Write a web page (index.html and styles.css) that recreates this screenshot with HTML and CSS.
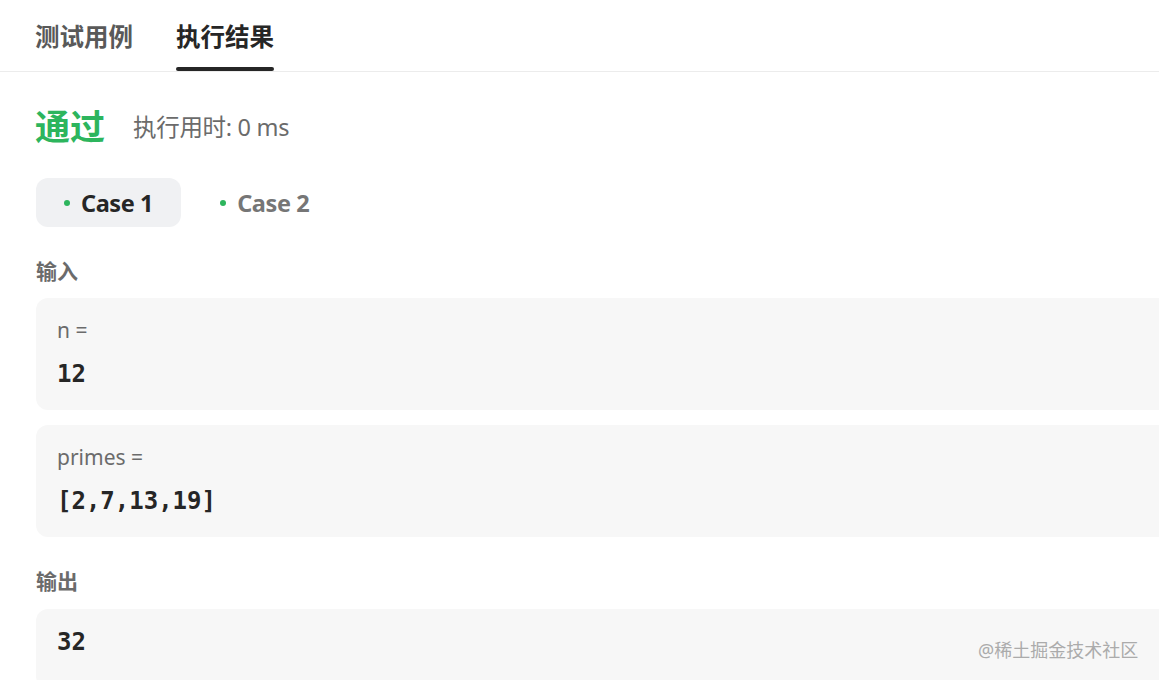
FILE: index.html
```html
<!DOCTYPE html>
<html lang="zh">
<head>
<meta charset="utf-8">
<link rel="stylesheet" href="styles.css">
</head>
<body>
<div class="page">
  <div class="tabs">
    <div class="tab">测试用例</div>
    <div class="tab active">执行结果<span class="bar"></span></div>
  </div>
  <div class="content">
    <div class="status">
      <span class="pass">通过</span>
      <span class="time">执行用时: 0 ms</span>
    </div>
    <div class="cases">
      <div class="case current"><span class="dot"></span>Case 1</div>
      <div class="case"><span class="dot"></span>Case 2</div>
    </div>
    <div class="label">输入</div>
    <div class="box">
      <div class="var">n =</div>
      <div class="val">12</div>
    </div>
    <div class="box">
      <div class="var">primes =</div>
      <div class="val">[2,7,13,19]</div>
    </div>
    <div class="label">输出</div>
    <div class="box out">
      <div class="val">32</div>
    </div>
  </div>
  <div class="watermark">@稀土掘金技术社区</div>
</div>
</body>
</html>
```
FILE: styles.css
```css
html, body {
  margin: 0;
  padding: 0;
  background: #ffffff;
  overflow: hidden;
}
body {
  font-family: "Noto Sans", "Noto Sans CJK SC", sans-serif;
}
.page {
  position: relative;
  width: 1159px;
  height: 680px;
  overflow: hidden;
}
.tabs {
  display: flex;
  gap: 43px;
  height: 71px;
  padding-left: 35px;
  border-bottom: 1px solid #ececec;
}
.tab {
  display: flex;
  flex-direction: column;
  justify-content: space-between;
  padding-top: 22px;
  font-size: 24.5px;
  line-height: 30px;
  font-weight: 700;
  color: #595959;
}
.tab.active {
  color: #262626;
}
.bar {
  display: block;
  height: 4px;
  border-radius: 2px;
  background: #262626;
}
.content {
  padding-left: 36px;
}
.status {
  display: flex;
  align-items: center;
  gap: 28px;
  margin-top: 35px;
  height: 40px;
}
.pass {
  font-size: 35px;
  line-height: 40px;
  font-weight: 700;
  color: #2db55d;
  margin-left: -1px;
}
.time {
  font-size: 23.5px;
  line-height: 30px;
  color: #6b6b6b;
  letter-spacing: -0.3px;
}
.cases {
  display: flex;
  gap: 11px;
  margin-top: 31px;
}
.case {
  display: flex;
  align-items: center;
  gap: 11px;
  height: 49px;
  padding: 0 29px 0 28px;
  border-radius: 12px;
  font-size: 23.5px;
  font-weight: 700;
  color: #767676;
  letter-spacing: -0.4px;
}
.case.current {
  background: #f0f1f3;
  color: #262626;
  padding-right: 28px;
}
.dot {
  width: 6px;
  height: 6px;
  border-radius: 50%;
  background: #2db55d;
}
.label {
  margin-top: 29px;
  font-size: 21px;
  line-height: 30px;
  font-weight: 700;
  color: #6b6b6b;
}
.box {
  margin-top: 12px;
  margin-right: -24px;
  padding: 17px 21px 20px;
  border-radius: 12px;
  background: #f7f7f7;
}
.box + .box {
  margin-top: 15px;
}
.var {
  font-size: 21px;
  line-height: 30px;
  color: #6b6b6b;
  margin-bottom: 13px;
}
.val {
  font-family: "DejaVu Sans Mono", "Liberation Mono", monospace;
  font-size: 24px;
  line-height: 32px;
  font-weight: 700;
  color: #262626;
}
.out {
  margin-top: 13px;
  padding-bottom: 30px;
}
.watermark {
  position: absolute;
  left: 978px;
  top: 637px;
  font-size: 18px;
  line-height: 26px;
  color: #ababab;
  white-space: nowrap;
}
```
